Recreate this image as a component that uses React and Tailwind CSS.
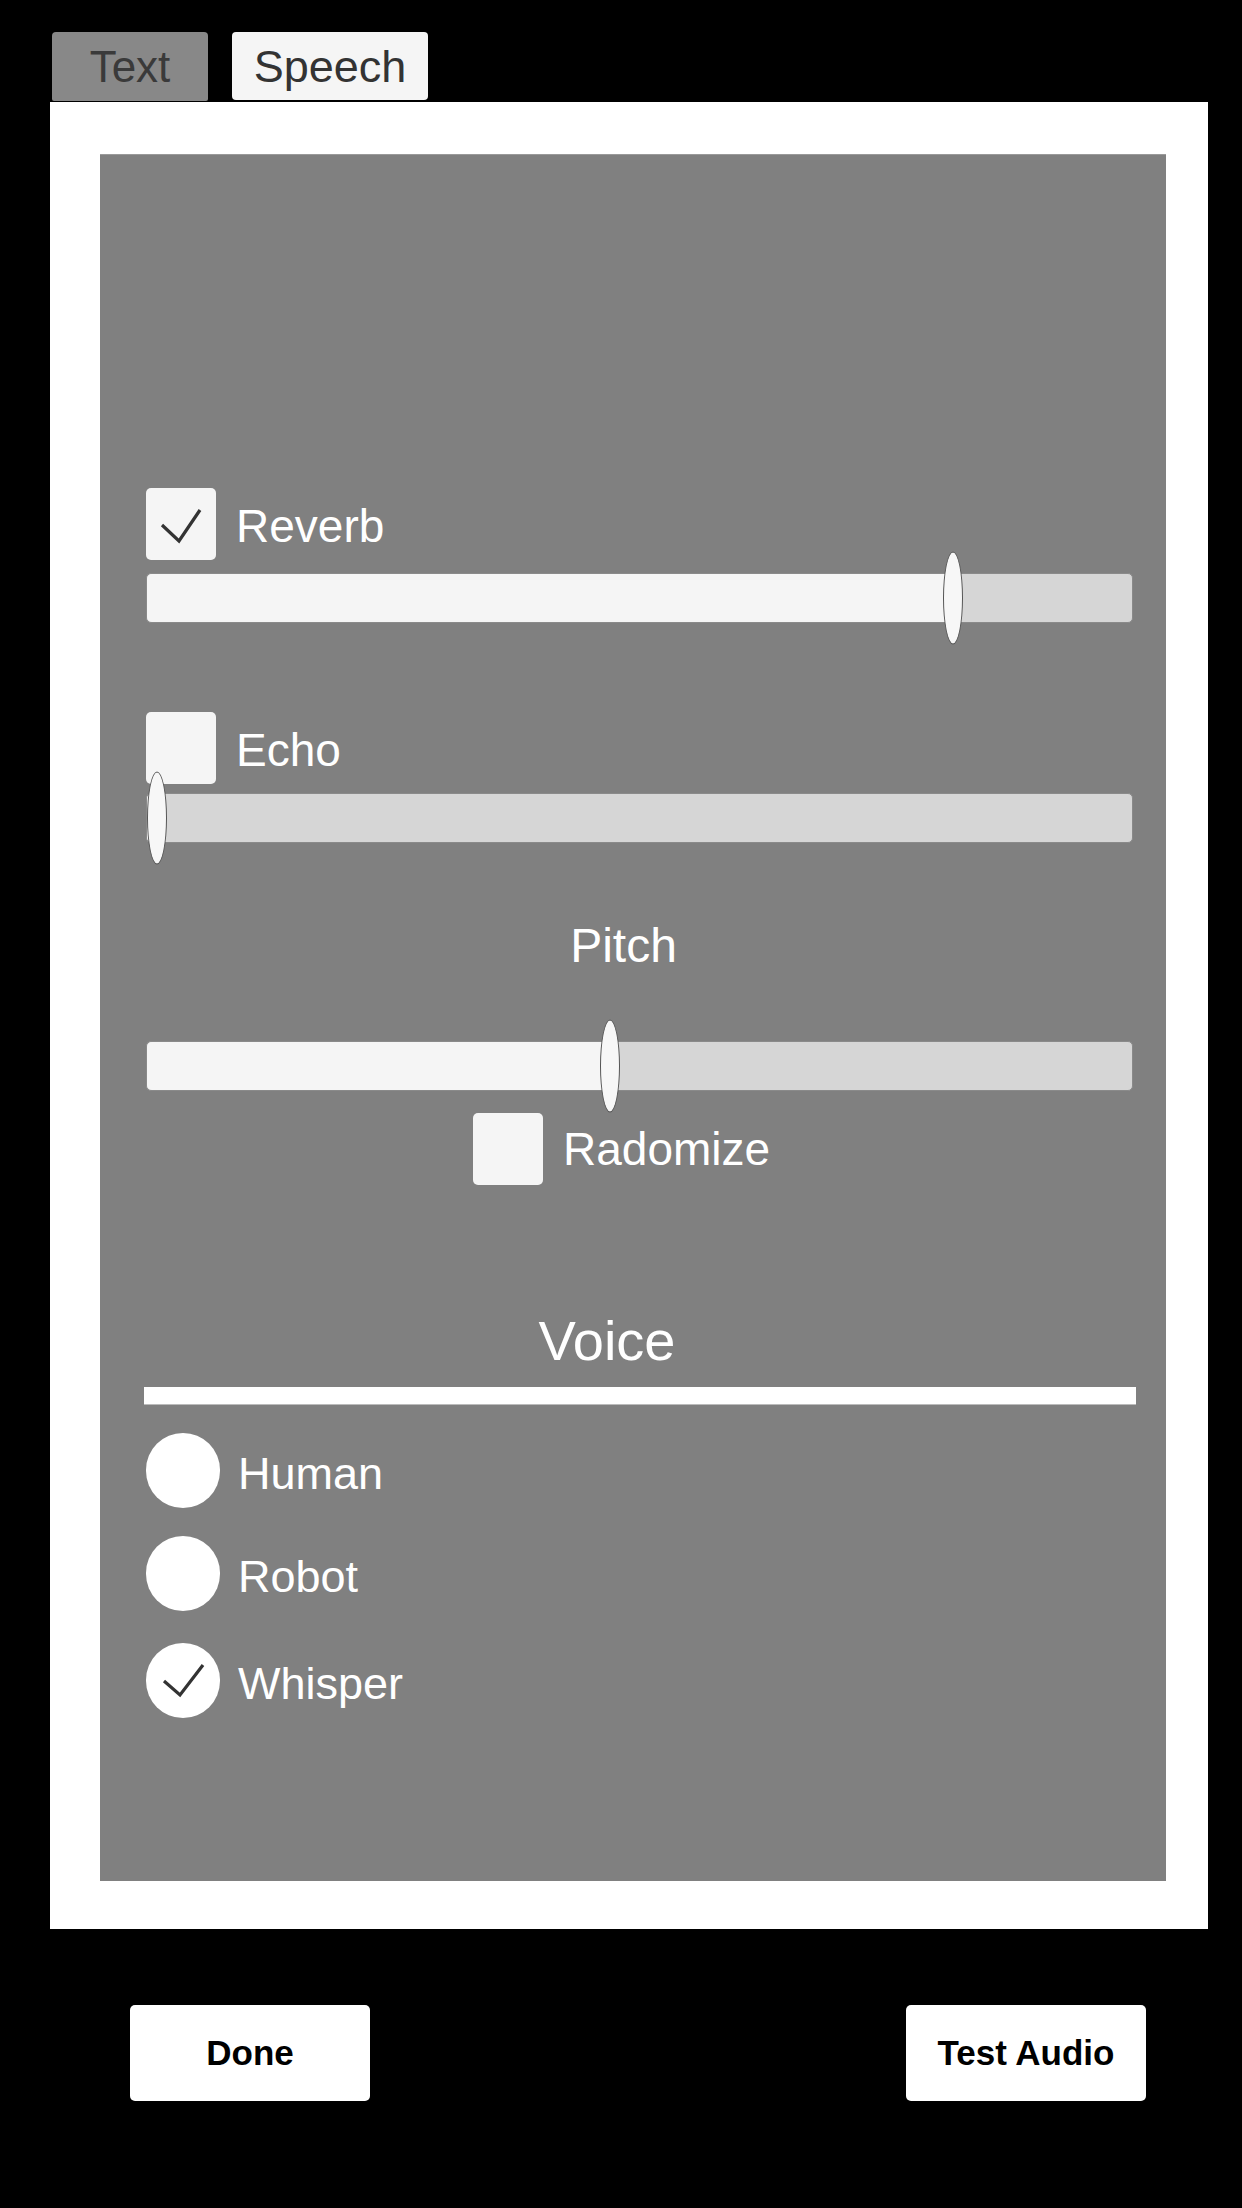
import React from 'react';

const font = { fontFamily: '"Liberation Sans", Arial, sans-serif' };

const Check = () => (
  <svg width="70" height="72" viewBox="0 0 70 72" className="absolute left-0 top-0">
    <polyline points="16,37 33,53 54,22" fill="none" stroke="#333333" strokeWidth="3.2" strokeLinejoin="miter" />
  </svg>
);

const CheckBox = ({ checked }) => (
  <div className="relative w-[70px] h-[72px] shrink-0 rounded-[5px] bg-[#f5f5f5]">
    {checked && <Check />}
  </div>
);

// track + oval handle, value 0..1
const Slider = ({ value, className = '' }) => (
  <div className={`relative w-[987px] h-[50px] rounded-[5px] bg-[#d6d6d6] border border-[#8a8a8a] ${className}`}>
    <div className="h-full rounded-l-[5px] bg-[#f5f5f5]" style={{ width: `${value * 100}%` }} />
    <div
      className="absolute top-1/2 w-[20px] h-[93px] -translate-x-1/2 -translate-y-1/2 rounded-[50%] bg-[#f7f7f7] border border-[#555]"
      style={{ left: `${value * 100}%` }}
    />
  </div>
);

const Radio = ({ label, checked, className = '' }) => (
  <div className={`flex items-center gap-[18px] ${className}`}>
    <div className="relative w-[74px] h-[75px] shrink-0 rounded-full bg-white">
      {checked && (
        <svg width="74" height="75" viewBox="0 0 74 75" className="absolute left-0 top-0">
          <polyline points="18,38 34,52 57,22" fill="none" stroke="#333333" strokeWidth="3.2" />
        </svg>
      )}
    </div>
    <span className="text-[45px] leading-none text-white mt-[5px]">{label}</span>
  </div>
);

export default function App() {
  return (
    <div className="w-[1242px] h-[2208px] bg-black overflow-hidden" style={font}>
      <div className="pl-[50px] pt-[32px]">
        {/* tabs */}
        <div className="flex gap-[24px] ml-[2px] h-[70px]">
          <div className="w-[156px] h-[69px] rounded-t-[4px] rounded-b-[2px] bg-[#888888] flex items-center justify-center">
            <span className="text-[44px] leading-none text-[#3a3a3a]">Text</span>
          </div>
          <div className="w-[196px] h-[68px] rounded-[4px] bg-[#f5f5f5] flex items-center justify-center">
            <span className="text-[45px] leading-none text-[#333333]">Speech</span>
          </div>
        </div>

        {/* white frame */}
        <div className="w-[1158px] h-[1827px] bg-white pt-[52px] pl-[50px]">
          <div className="w-[1066px] h-[1727px] bg-[#808080] border-t border-[#9a9a9a] pl-[46px] flex flex-col">
            <div className="flex items-center gap-[20px] mt-[333px]">
              <CheckBox checked />
              <span className="text-[46px] leading-none text-white mt-[4px]">Reverb</span>
            </div>
            <Slider value={0.818} className="mt-[13px]" />

            <div className="flex items-center gap-[20px] mt-[89px]">
              <CheckBox />
              <span className="text-[46px] leading-none text-white mt-[3px]">Echo</span>
            </div>
            <Slider value={0.01} className="mt-[9px]" />

            <div className="w-[955px] mt-[79px] text-center text-[48px] leading-none text-white">Pitch</div>
            <Slider value={0.47} className="mt-[71px]" />

            <div className="flex items-center gap-[20px] mt-[22px] pl-[327px]">
              <CheckBox />
              <span className="text-[46px] leading-none text-white">Radomize</span>
            </div>

            <div className="w-[922px] mt-[128px] text-center text-[56px] leading-none text-white">Voice</div>
            <div className="w-[992px] h-[18px] -ml-[2px] mt-[18px] bg-white border-b border-[#bbbbbb]" />

            <Radio label="Human" className="mt-[28px]" />
            <Radio label="Robot" className="mt-[28px]" />
            <Radio label="Whisper" checked className="mt-[32px]" />
          </div>
        </div>
      </div>

      {/* bottom buttons */}
      <div className="flex justify-between pl-[130px] pr-[96px] mt-[76px]">
        <button className="w-[240px] h-[96px] rounded-[5px] bg-white text-[35px] font-bold text-black">Done</button>
        <button className="w-[240px] h-[96px] rounded-[5px] bg-white text-[35px] font-bold text-black">Test Audio</button>
      </div>
    </div>
  );
}
